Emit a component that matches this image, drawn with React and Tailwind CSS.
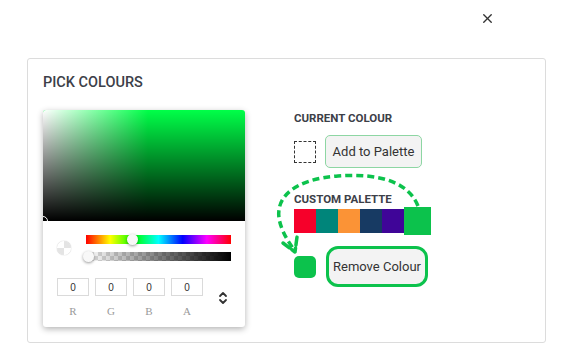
import React from 'react';
import { X } from 'lucide-react';

const palette = ['#f6002a', '#00857a', '#fb9336', '#173a63', '#3f0598'];

const rgba = ['R', 'G', 'B', 'A'];

const Picker = () => (
  <div className="w-[202px] h-[217px] bg-white rounded-[3px] shadow-[0_2px_6px_rgba(0,0,0,0.3)] overflow-hidden flex flex-col">
    <div className="relative h-[111px] bg-[#00ff48]">
      <div className="absolute inset-0 bg-linear-to-r from-white to-transparent to-[52%]" />
      <div className="absolute inset-0 bg-linear-to-b from-transparent to-black" />
      <div className="absolute left-[-5px] bottom-[-5px] w-[10px] h-[10px] rounded-full border border-white" />
    </div>
    <div className="flex items-center pl-[14px] pr-[14px] pt-[14px]">
      <div className="w-[14px] h-[14px] rounded-full bg-[conic-gradient(#e4e4e4_25%,#fff_0_50%,#e4e4e4_0_75%,#fff_0)] shadow-[0_0_1px_rgba(0,0,0,0.4)]" />
      <div className="ml-[15px] flex-1 flex flex-col gap-[8px]">
        <div className="relative h-[9px] bg-[linear-gradient(to_right,#f00,#ff0,#0f0,#0ff,#00f,#f0f,#f00)]">
          <div className="absolute left-[41px] top-[-1px] w-[11px] h-[11px] rounded-full bg-[#f8f8f8] shadow-[0_1px_3px_rgba(0,0,0,0.4)]" />
        </div>
        <div className="relative h-[9px] bg-[conic-gradient(#ddd_25%,#fff_0_50%,#ddd_0_75%,#fff_0)] bg-[length:8px_8px]">
          <div className="absolute inset-0 bg-linear-to-r from-transparent to-black" />
          <div className="absolute left-[-3px] top-[-1px] w-[11px] h-[11px] rounded-full bg-[#f8f8f8] shadow-[0_1px_3px_rgba(0,0,0,0.4)]" />
        </div>
      </div>
    </div>
    <div className="flex pl-[14px] pr-[17px] pt-[17px] items-start">
      <div className="flex gap-[6px]">
        {rgba.map((l) => (
          <div key={l} className="flex flex-col items-center w-[32px]">
            <div className="w-[32px] h-[18px] border border-[#dadada] flex items-center justify-center text-[10px] text-[#333] font-['Liberation_Sans',sans-serif]">0</div>
            <div className="mt-[8px] text-[11px] leading-[14px] text-[#9a9a9a] font-['Liberation_Serif',serif]">{l}</div>
          </div>
        ))}
      </div>
      <div className="ml-auto mt-[12px]">
        <svg width="10" height="16" viewBox="0 0 10 16" fill="none" stroke="#333" strokeWidth="1.8" strokeLinecap="round" strokeLinejoin="round">
          <path d="M2 6 L5 3 L8 6" />
          <path d="M2 10 L5 13 L8 10" />
        </svg>
      </div>
    </div>
  </div>
);

const Arrow = () => (
  <svg className="absolute left-[243px] top-[112px]" width="170" height="95" viewBox="0 0 170 95" fill="none" stroke="#0cc24c" strokeWidth="3.5">
    <path d="M147 35 C 135 5, 95 3, 67 5 C 25 8, 5 25, 8 47 C 10 60, 18 72, 24 80" strokeDasharray="7 4" />
    <path d="M12 72 L24 81 L26 66" strokeLinecap="round" strokeLinejoin="round" strokeDasharray="8 3" />
  </svg>
);

export default function App() {
  return (
    <div className="w-[574px] h-[355px] bg-white font-['Roboto',sans-serif] text-[#3c4048]">
      <div className="h-[58px] flex justify-end items-start pt-[11px] pr-[79px]">
        <X size={15} strokeWidth={2.2} className="text-[#333]" />
      </div>
      <div className="relative ml-[27px] w-[519px] h-[285px] border border-[#dcdcdc] rounded-[3px] pl-[15px] pt-[14px]">
        <h2 className="text-[14.5px] leading-[20px] font-medium text-[#3c4048]">PICK COLOURS</h2>
        <div className="flex mt-[17px]">
          <Picker />
          <div className="ml-[49px] pt-[1px] flex flex-col">
            <div className="text-[11.5px] leading-[14px] font-bold text-[#3c4048]">CURRENT COLOUR</div>
            <div className="flex items-center mt-[10px]">
              <div className="w-[22px] h-[22px] border border-dashed border-[#333]" />
              <button className="ml-[9px] w-[97px] h-[33px] rounded-[5px] border border-[#8dd6a3] bg-[#f3f3f3] text-[13px] text-[#333]">Add to Palette</button>
            </div>
            <div className="mt-[24px] text-[11.5px] leading-[14px] font-bold text-[#3c4048]">CUSTOM PALETTE</div>
            <div className="flex items-center mt-[1px]">
              {palette.map((c) => (
                <div key={c} className="w-[22px] h-[24px]" style={{ backgroundColor: c }} />
              ))}
              <div className="w-[27px] h-[28px] bg-[#0cc24c]" />
            </div>
            <div className="flex items-center mt-[11px]">
              <div className="w-[22px] h-[22px] rounded-[5px] bg-[#0cc24c]" />
              <button className="ml-[10px] w-[102px] h-[41px] rounded-[12px] border-[3px] border-[#0cc24c] bg-[#f3f3f3] text-[13px] text-[#333]">Remove Colour</button>
            </div>
          </div>
        </div>
        <Arrow />
      </div>
    </div>
  );
}
